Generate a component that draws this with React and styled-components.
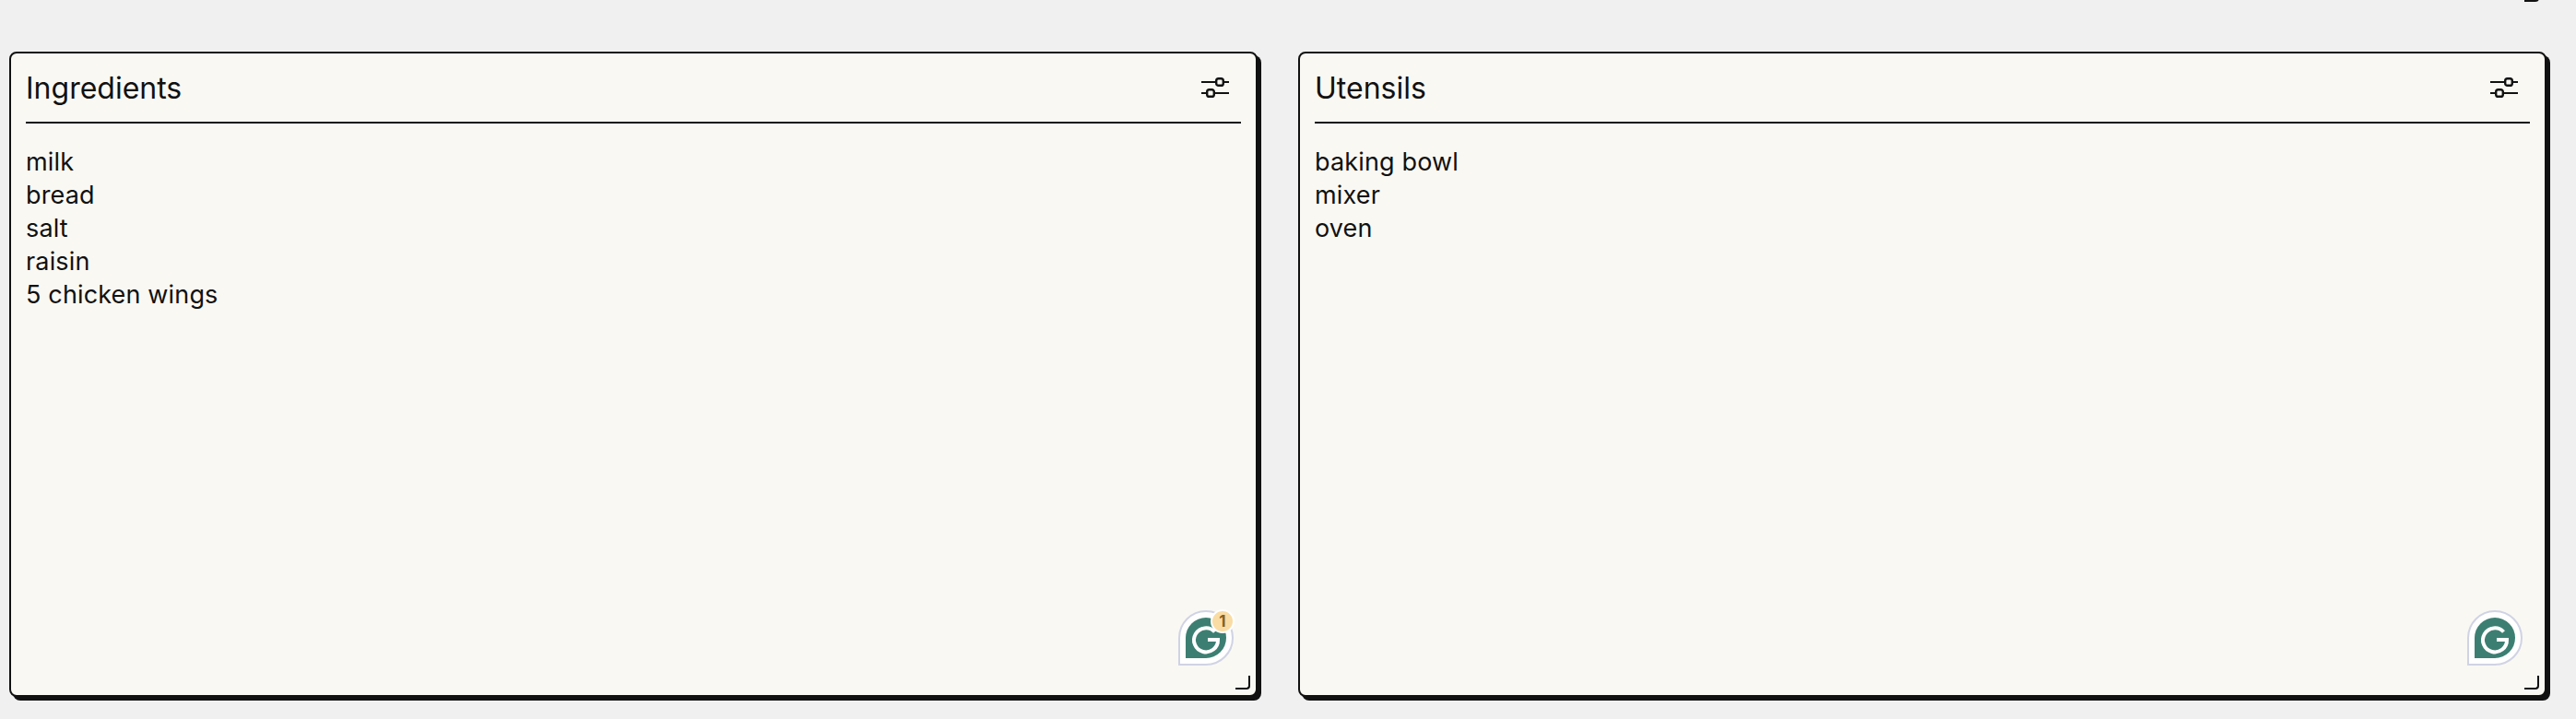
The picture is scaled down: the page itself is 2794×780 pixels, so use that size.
import React from 'react'
import styled, { createGlobalStyle } from 'styled-components'

const GlobalStyle = createGlobalStyle`
  html, body {
    margin: 0;
    background: #f0f0f0;
    color: #111;
    font-family: 'Inter', 'Liberation Sans', sans-serif;
  }
`

const Page = styled.div`
  position: relative;
  height: 780px;
  overflow: hidden;
  box-sizing: border-box;
  padding: 56px 32px 0 10px;
  display: grid;
  grid-template-columns: 1354px 1354px;
  column-gap: 44px;
  align-items: start;
`

const Card = styled.section`
  position: relative;
  box-sizing: border-box;
  height: 700px;
  padding: 0 16px;
  background: #f9f8f3;
  border: 2px solid #111;
  border-radius: 8px;
  box-shadow: 4px 4px 0 #111;
`

const Header = styled.header`
  height: 74px;
  display: flex;
  align-items: center;
  justify-content: space-between;
  border-bottom: 2px solid #111;
`

const Title = styled.h2`
  margin: 0;
  font-size: 32px;
  font-weight: 400;
`

const Items = styled.ul`
  list-style: none;
  margin: 0;
  padding: 24px 0 0;
  font-size: 27px;
  line-height: 36px;
  letter-spacing: 0.15px;
`

const SettingsButton = styled.button`
  display: flex;
  padding: 0;
  margin-right: 13px;
  border: 0;
  background: none;
  color: #111;
`

const Handle = styled.div`
  position: absolute;
  right: 6px;
  bottom: 6px;
  width: 14px;
  height: 13px;
  border-right: 2px solid #111;
  border-bottom: 2px solid #111;
  border-bottom-right-radius: 4px;
`

const StrayHandle = styled(Handle)`
  right: 40px;
  bottom: auto;
  top: -13px;
`

const Grammarly = styled.div`
  position: absolute;
  right: 24px;
  bottom: 32px;
  width: 60px;
  height: 60px;
`

const Badge = styled.span`
  position: absolute;
  top: -1px;
  right: -1px;
  box-sizing: border-box;
  width: 26px;
  height: 26px;
  display: flex;
  align-items: center;
  justify-content: center;
  border: 2px solid #fff;
  border-radius: 50%;
  background: #f9dca4;
  color: #8a5f20;
  font-size: 17px;
  font-weight: 700;
`

const SlidersIcon = () => (
  <svg width="30" height="24" viewBox="0 0 30 24" fill="none" stroke="currentColor" strokeWidth="2.4">
    <path d="M0 6h15M25 6h5M0 18h5M15 18h15" strokeWidth="2" />
    <rect x="16.2" y="2.2" width="7.6" height="7.6" rx="2.4" />
    <rect x="6.2" y="14.2" width="7.6" height="7.6" rx="2.4" />
  </svg>
)

const GrammarlyIcon = () => (
  <svg width="60" height="60" viewBox="0 0 60 60">
    <path d="M1 59V30a29 29 0 1 1 29 29z" fill="#fff" stroke="#d0d3e4" strokeWidth="2" />
    <path d="M8 52V30a22 22 0 1 1 22 22z" fill="#3c7f72" />
    <path
      d="M39.5 23.5A13 13 0 1 0 43 32H32"
      fill="none"
      stroke="#fff"
      strokeWidth="4"
    />
  </svg>
)

const panels = [
  { title: 'Ingredients', items: ['milk', 'bread', 'salt', 'raisin', '5 chicken wings'], badge: 1 },
  { title: 'Utensils', items: ['baking bowl', 'mixer', 'oven'] },
]

const App = () => (
  <Page>
    <GlobalStyle />
    <StrayHandle />
    {panels.map(panel => (
      <Card key={panel.title}>
        <Header>
          <Title>{panel.title}</Title>
          <SettingsButton aria-label="Settings">
            <SlidersIcon />
          </SettingsButton>
        </Header>
        <Items>
          {panel.items.map(item => (
            <li key={item}>{item}</li>
          ))}
        </Items>
        <Grammarly>
          <GrammarlyIcon />
          {panel.badge && <Badge>{panel.badge}</Badge>}
        </Grammarly>
        <Handle />
      </Card>
    ))}
  </Page>
)

export default App
